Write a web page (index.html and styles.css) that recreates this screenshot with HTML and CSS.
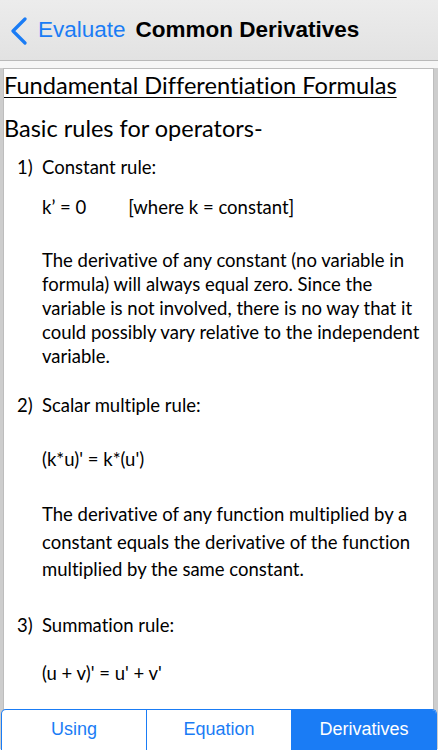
FILE: index.html
```html
<!DOCTYPE html>
<html>
    <head>
        <meta charset="UTF-8">
        <meta name="viewport" content="width=device-width, initial-scale=1.0">
        <title>Common Derivatives</title>
        <link rel="stylesheet" href="styles.css">
    </head>
    <body>
        <div class="application">
            <div class="nav-bar">
                <a class="nav-back" href="#">
                    <svg class="chevron" width="18" height="28" viewBox="0 0 18 28">
                        <path d="M15 2 L3 14 L15 26" fill="none" stroke="#1a7cf5" stroke-width="3.2" stroke-linecap="round" stroke-linejoin="round"/>
                    </svg>
                    <span>Evaluate</span>
                </a>
                <h1 class="nav-title">Common Derivatives</h1>
            </div>
            <div class="doc-scroll">
                <div class="doc-sheet">
                    <div class="doc-page">
                        <h2 class="doc-title">Fundamental Differentiation Formulas</h2>
                        <h3 class="doc-subtitle">Basic rules for operators-</h3>

                        <div class="rule rule-1">
                            <p class="rule-name"><span class="rule-num">1)</span>Constant rule:</p>
                            <p class="rule-formula">k’ = 0<span class="formula-note">[where k = constant]</span></p>
                            <p class="rule-text">The derivative of any constant (no variable in<br>formula) will always equal zero. Since the<br>variable is not involved, there is no way that it<br>could possibly vary relative to the independent<br>variable.</p>
                        </div>

                        <div class="rule rule-2">
                            <p class="rule-name"><span class="rule-num">2)</span>Scalar multiple rule:</p>
                            <p class="rule-formula">(k*u)' = k*(u')</p>
                            <p class="rule-text loose">The derivative of any function multiplied by a<br>constant equals the derivative of the function<br>multiplied by the same constant.</p>
                        </div>

                        <div class="rule rule-3">
                            <p class="rule-name"><span class="rule-num">3)</span>Summation rule:</p>
                            <p class="rule-formula">(u + v)' = u' + v'</p>
                        </div>
                    </div>
                </div>
            </div>
            <div class="tab-bar">
                <div class="tab">Using</div>
                <div class="tab">Equation</div>
                <div class="tab active">Derivatives</div>
            </div>
        </div>
    </body>
</html>
```

FILE: styles.css
```css
body{
    margin: 0;
    font-family: Lato, 'Open Sans', sans-serif;
    font-variant-ligatures: none;
    color: #000;
}
.application{
    width: 100vw;
    height: 100vh;
    display: flex;
    flex-direction: column;
    overflow: hidden;
    background-color: #f6f6f6;
}
.nav-bar{
    flex: none;
    height: 60px;
    display: flex;
    align-items: center;
    background: linear-gradient(#ececec, #e2e2e2);
    border-bottom: 1px solid #b9b9b9;
    font-family: 'Liberation Sans', Arial, sans-serif;
}
.nav-back{
    display: flex;
    align-items: center;
    color: #1a7cf5;
    text-decoration: none;
    font-size: 22.5px;
    margin-left: 10px;
}
.chevron{
    margin-right: 10px;
    margin-top: 1px;
}
.nav-title{
    font-size: 22.5px;
    font-weight: bold;
    margin: 0 0 0 10px;
}
.doc-scroll{
    flex: 1;
    min-height: 0;
    padding-top: 7px;
}
.doc-sheet{
    height: 100%;
    background-color: #cdcdcd;
    padding: 0 4px 0 3px;
}
.doc-page{
    height: 100%;
    background-color: #fff;
    border: 1px solid #bdbdbd;
    border-bottom: none;
    box-sizing: border-box;
}
.doc-title{
    font-size: 23.6px;
    font-weight: normal;
    line-height: 30px;
    margin: 1px 0 0;
    text-decoration: underline;
    text-decoration-thickness: 1px;
    text-underline-offset: 3px;
}
.doc-subtitle{
    font-size: 23.5px;
    font-weight: normal;
    line-height: 30px;
    margin: 13px 0 0;
}
.rule p{
    margin: 0;
    font-size: 18.5px;
    line-height: 24px;
}
.rule-name{
    padding-left: 13px;
}
.rule-num{
    display: inline-block;
    width: 25px;
}
.rule-formula,
.rule-text{
    padding-left: 38px;
}
.formula-note{
    margin-left: 42px;
}
.rule-1{ margin-top: 12px; }
.rule-1 .rule-formula{ margin-top: 16px; }
.rule-1 .rule-text{ margin-top: 29px; }
.rule-2{ margin-top: 25px; }
.rule-2 .rule-formula{ margin-top: 30px; }
.rule-2 .rule-text{ margin-top: 30px; }
.rule-text.loose{
    line-height: 27.5px;
}
.rule-3{ margin-top: 29px; }
.rule-3 .rule-formula{ margin-top: 24px; }
.tab-bar{
    flex: none;
    display: flex;
    height: 40px;
    margin: -40px 1px 0;
    position: relative;
    border: 1px solid #1a7cf5;
    border-bottom: none;
    border-radius: 5px 5px 0 0;
    overflow: hidden;
    background-color: #fff;
    font-family: 'Liberation Sans', Arial, sans-serif;
}
.tab{
    flex: 1;
    display: flex;
    align-items: center;
    justify-content: center;
    padding-bottom: 2px;
    color: #1a7cf5;
    font-size: 18px;
}
.tab + .tab{
    border-left: 1px solid #1a7cf5;
}
.tab.active{
    background-color: #1a7cf5;
    color: #fff;
}
```
